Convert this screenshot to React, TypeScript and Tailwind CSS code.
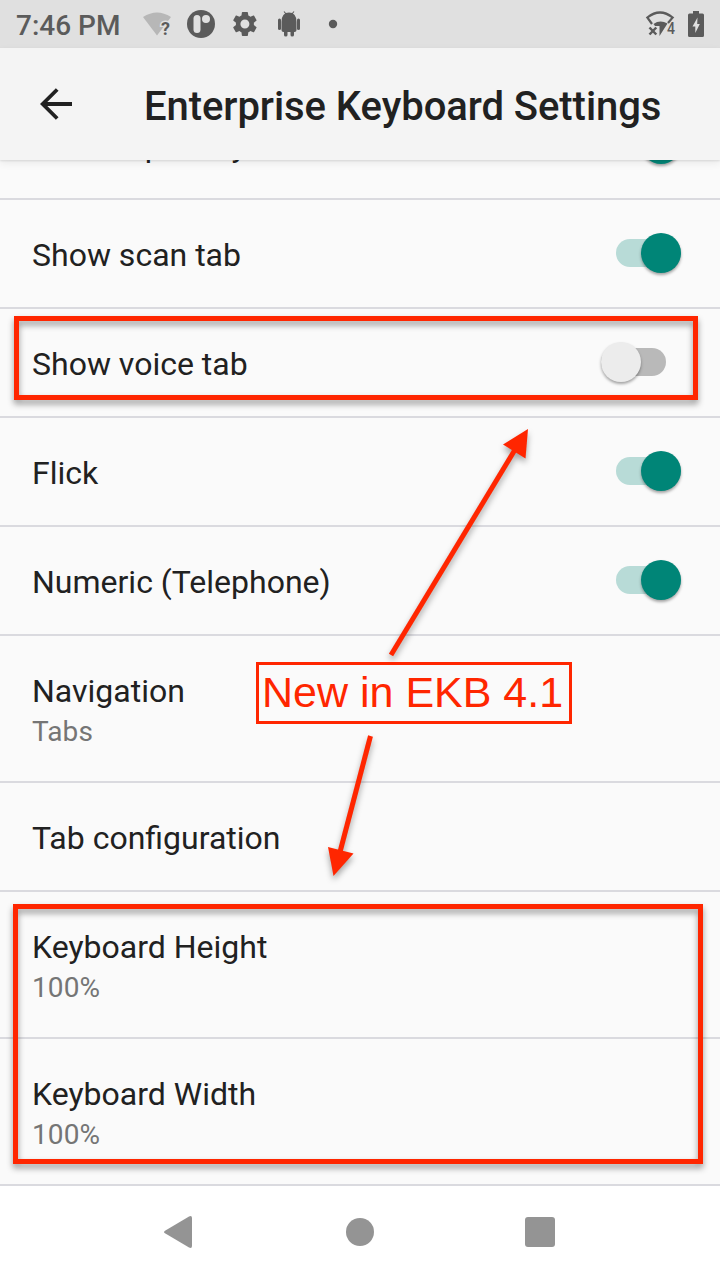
import type { ReactNode } from "react";

function StatusBar() {
  return (
    <div className="flex h-12 shrink-0 items-center bg-[#e0e0e0] pl-4 text-[#5b5b5b]">
      <span className="w-[127px] whitespace-nowrap pt-[3px] text-[28px] leading-8 font-medium">7:46 PM</span>
      <svg className="h-12 w-[200px]" viewBox="143 0 200 48">
        <path d="M143 17 Q157 8 171 17 L157 35.5Z" fill="#b7b7b7" />
        <text x="161" y="35" fontSize="18" fontWeight="700" fontFamily="Roboto, sans-serif" fill="#5b5b5b" stroke="#e0e0e0" strokeWidth="3" paintOrder="stroke">?</text>
        <circle cx="201" cy="24" r="14" fill="currentColor" />
        <rect x="193.5" y="15" width="7" height="18" rx="3.5" fill="#e0e0e0" />
        <circle cx="206" cy="19" r="4" fill="#e0e0e0" />
        <g transform="translate(229.9 8.9) scale(1.25)">
          <path fill="currentColor" d="M19.14 12.94c.04-.3.06-.61.06-.94 0-.32-.02-.64-.07-.94l2.03-1.58c.18-.14.23-.41.12-.61l-1.92-3.32c-.12-.22-.37-.29-.59-.22l-2.39.96c-.5-.38-1.03-.7-1.62-.94l-.36-2.54c-.04-.24-.24-.41-.48-.41h-3.84c-.24 0-.43.17-.47.41l-.36 2.54c-.59.24-1.13.57-1.62.94l-2.39-.96c-.22-.08-.47 0-.59.22L2.74 8.87c-.12.21-.08.47.12.61l2.03 1.58c-.05.3-.09.63-.09.94s.02.64.07.94l-2.03 1.58c-.18.14-.23.41-.12.61l1.92 3.32c.12.22.37.29.59.22l2.39-.96c.5.38 1.03.7 1.62.94l.36 2.54c.05.24.24.41.48.41h3.84c.24 0 .44-.17.47-.41l.36-2.54c.59-.24 1.13-.56 1.62-.94l2.39.96c.22.08.47 0 .59-.22l1.92-3.32c.12-.22.07-.47-.12-.61l-2.01-1.58zM12 15.6c-1.98 0-3.6-1.62-3.6-3.6s1.62-3.6 3.6-3.6 3.6 1.62 3.6 3.6-1.62 3.6-3.6 3.6z" />
        </g>
        <g fill="currentColor">
          <path d="M281.5 22 Q281.5 12.5 289 12.5 Q296.5 12.5 296.5 22 V30 Q296.5 32 294.5 32 H294 V35 Q294 36.5 292.2 36.5 Q290.5 36.5 290.5 35 V32 H287.5 V35 Q287.5 36.5 285.8 36.5 Q284 36.5 284 35 V32 H283.5 Q281.5 32 281.5 30Z" />
          <rect x="278" y="18.5" width="3" height="11.5" rx="1.5" />
          <rect x="297" y="18.5" width="3" height="11.5" rx="1.5" />
          <path d="M284 11.5l2.5 3M294 11.5l-2.5 3" stroke="currentColor" strokeWidth="1.1" />
          <circle cx="333" cy="24" r="4.2" />
        </g>
      </svg>
      <svg className="ml-auto mr-3 h-12 w-[66px]" viewBox="642 0 66 48">
        <g fill="none" stroke="currentColor">
          <path d="M652 24 L647.3 17.5 Q660 7.5 672.7 17.5 L668 23" strokeWidth="2.2" />
          <path d="M649.5 27.5l6.8 7M656.3 27.5l-6.8 7" strokeWidth="2.5" />
        </g>
        <path d="M653.5 24 Q660 19.5 667.5 23.5 L659.5 36 V26 H655Z" fill="currentColor" />
        <text x="667" y="33.5" fontSize="17" fontWeight="500" textLength="8" lengthAdjust="spacingAndGlyphs" fontFamily="Roboto, sans-serif" fill="currentColor">4</text>
        <path d="M693 11 H699 V13.5 H702.5 Q704 13.5 704 15 V35.5 Q704 37 702.5 37 H689.5 Q688 37 688 35.5 V15 Q688 13.5 689.5 13.5 H693Z" fill="currentColor" />
        <path d="M697.5 17.5 L692.5 26.5 H695.3 V33 L699.8 24 H697.2Z" fill="#e0e0e0" />
      </svg>
    </div>
  );
}

function Header() {
  return (
    <header className="relative z-10 flex h-28 shrink-0 items-center bg-[#f4f4f4] pl-10 shadow-[0_1px_2px_rgba(0,0,0,0.1),0_3px_8px_rgba(0,0,0,0.07)]">
      <svg className="h-8 w-8 shrink-0" viewBox="0 0 32 32" fill="none" stroke="#212121" strokeWidth="3.8">
        <path d="M32 16H3M17.2 1.5L2.7 16L17.2 30.5" />
      </svg>
      <h1 className="ml-[72px] pt-1.5 whitespace-nowrap text-[40px] leading-[48px] font-medium tracking-[-0.06px] text-[#212121]">Enterprise Keyboard Settings</h1>
    </header>
  );
}

function Toggle({ on }: { on: boolean }) {
  return on ? (
    <span className="mr-[39px] mb-0.5 flex h-7 w-[65px] items-center justify-end rounded-full bg-[#b8dbd7]">
      <span className="h-10 w-10 shrink-0 rounded-full bg-[#008577] shadow-[0_2px_3px_rgba(0,0,0,0.35)]" />
    </span>
  ) : (
    <span className="mr-[54px] mb-0.5 flex h-7 w-[65px] items-center rounded-full bg-[#b9b9b9]">
      <span className="h-10 w-10 shrink-0 rounded-full bg-[#ececec] shadow-[0_2px_3px_rgba(0,0,0,0.35)]" />
    </span>
  );
}

function Row({ label, detail, children }: { label: string; detail?: string; children?: ReactNode }) {
  return (
    <li className={detail ? "flex h-[147px] shrink-0 border-b-2 border-[#dadadf] pl-8" : "flex h-[109px] shrink-0 items-center border-b-2 border-[#dadadf] pl-8"}>
      <div className={detail ? "flex-1 pt-9" : "flex-1 pt-0.5"}>
        <div className="whitespace-nowrap text-[32px] leading-[38px] text-[#212121]">{label}</div>
        {detail && <div className="mt-[5px] text-[28px] leading-[33px] tracking-[0.1px] text-[#757575]">{detail}</div>}
      </div>
      {children}
    </li>
  );
}

function Annotations() {
  return (
    <div className="pointer-events-none absolute inset-0 z-20">
      <div className="absolute top-[315.5px] left-[13.5px] h-[84px] w-[684px] border-[5px] border-[#ff2600] drop-shadow-[0_4px_3px_rgba(0,0,0,0.4)]" />
      <div className="absolute top-[904px] left-[12.5px] h-[260px] w-[690px] border-[5px] border-[#ff2600] drop-shadow-[0_4px_3px_rgba(0,0,0,0.4)]" />
      <svg className="absolute inset-0 h-full w-full drop-shadow-[0_4px_3px_rgba(0,0,0,0.35)]" viewBox="0 0 720 1280" fill="#ff2600" stroke="#ff2600">
        <path d="M391 655L516 448" strokeWidth="5" />
        <path d="M528 429L503 444.5L525.5 458.5Z" stroke="none" />
        <path d="M370.5 736L340 852" strokeWidth="5" />
        <path d="M333.5 876L328 847L353.5 853.5Z" stroke="none" />
      </svg>
      <div className="absolute top-[662px] left-[256px] flex h-[62px] w-[316px] items-center border-[3px] border-[#ff2600] pb-0.5 pl-[3px] font-['Liberation_Sans',Arial,sans-serif] text-[43px] leading-[50px] whitespace-nowrap text-[#ff2600]">New in EKB 4.1</div>
    </div>
  );
}

export default function App() {
  return (
    <div className="relative flex h-[1280px] w-[720px] flex-col overflow-hidden bg-[#fafafa] font-['Roboto',sans-serif]">
      <StatusBar />
      <Header />
      <main className="h-[1026px] shrink-0 overflow-hidden">
        <ul className="-mt-[69px] flex flex-col">
          <Row label="Voice input key"><Toggle on /></Row>
          <Row label="Show scan tab"><Toggle on /></Row>
          <Row label="Show voice tab"><Toggle on={false} /></Row>
          <Row label="Flick"><Toggle on /></Row>
          <Row label="Numeric (Telephone)"><Toggle on /></Row>
          <Row label="Navigation" detail="Tabs" />
          <Row label="Tab configuration" />
          <Row label="Keyboard Height" detail="100%" />
          <Row label="Keyboard Width" detail="100%" />
        </ul>
      </main>
      <nav className="flex h-[94px] shrink-0 items-center justify-between bg-white pr-[165px] pl-[164px] pb-0.5">
        <svg className="h-8 w-7" viewBox="0 0 28 32" fill="#949494">
          <path d="M25 .4Q28-.8 28 2V30Q28 32.8 25 31.5L1 17.3Q-1 16 1 14.7Z" />
        </svg>
        <span className="ml-[3px] h-7 w-7 rounded-full bg-[#949494]" />
        <span className="h-[30px] w-[30px] rounded-[3px] bg-[#949494]" />
      </nav>
      <Annotations />
    </div>
  );
}
